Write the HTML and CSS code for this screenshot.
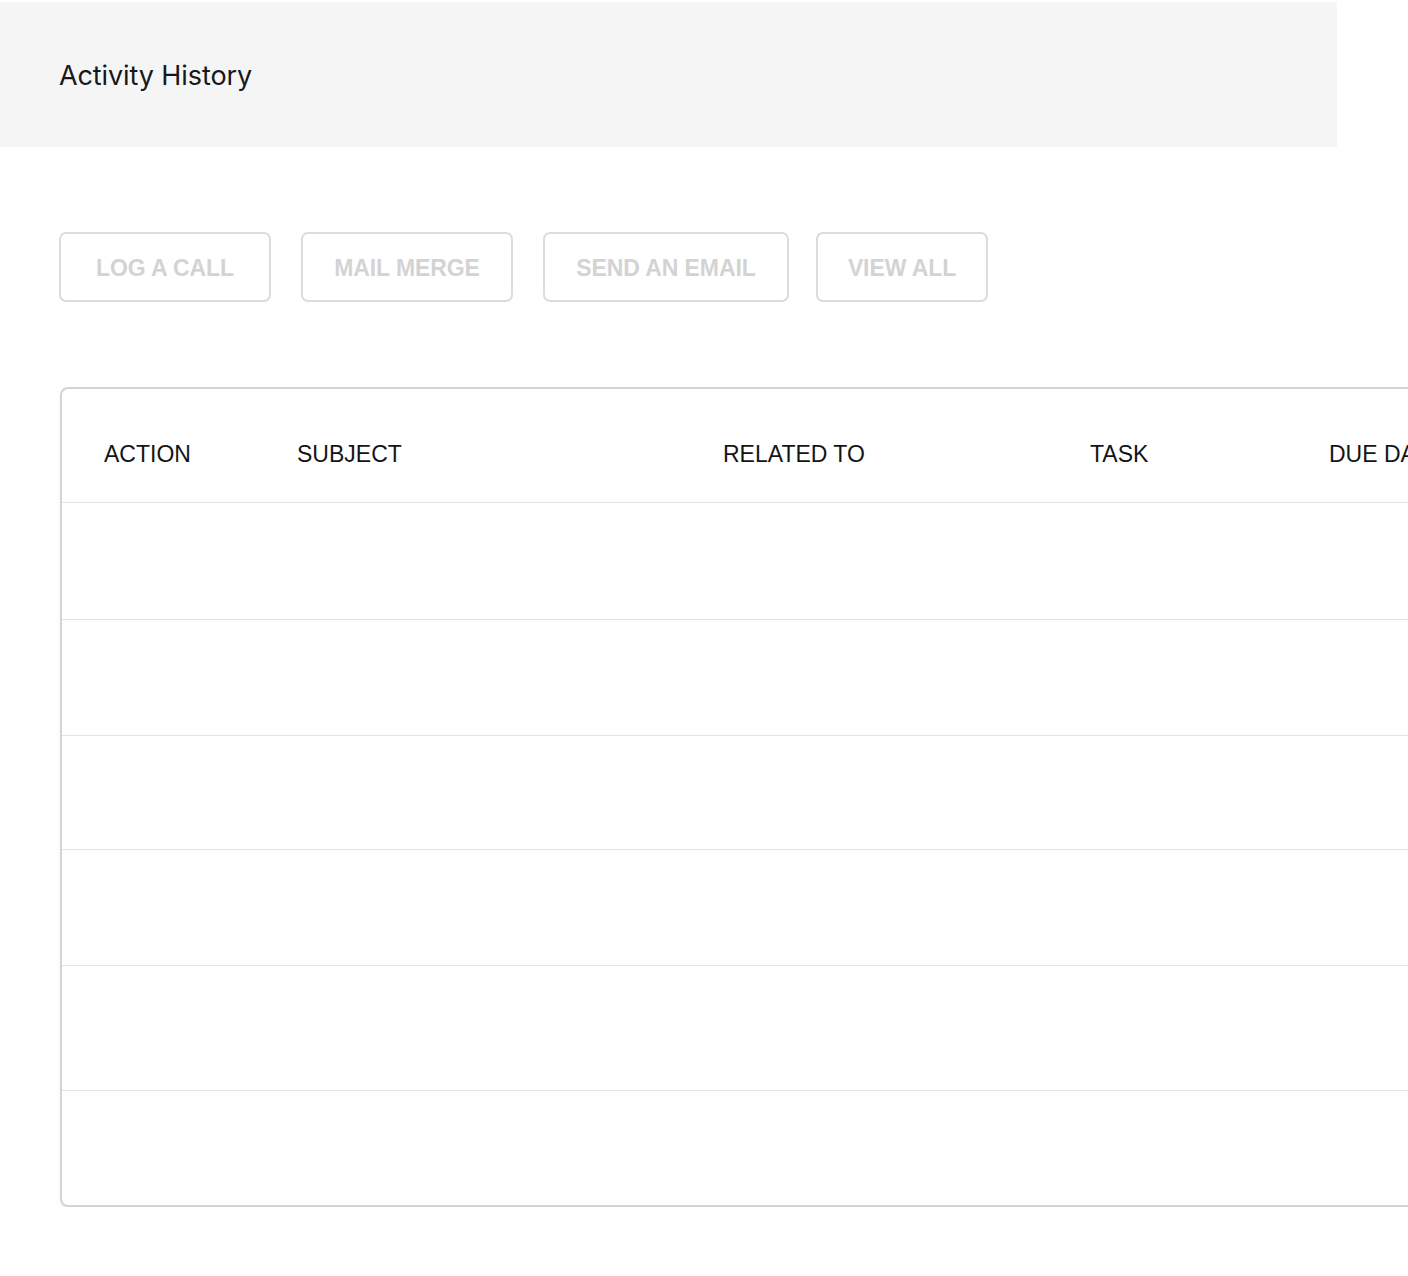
FILE: index.html
```html
<!DOCTYPE html>
<html lang="en">
<head>
<meta charset="utf-8">
<title>Activity History</title>
<link rel="stylesheet" href="styles.css">
</head>
<body>
<header class="page-header">
  <h1 class="page-title">Activity History</h1>
</header>
<main class="content">
  <div class="actions">
    <button class="btn btn-wide" type="button">LOG A CALL</button>
    <button class="btn btn-wide" type="button">MAIL MERGE</button>
    <button class="btn btn-email" type="button">SEND AN EMAIL</button>
    <button class="btn" type="button">VIEW ALL</button>
  </div>
  <div class="table">
    <div class="row head">
      <div class="cell">ACTION</div>
      <div class="cell">SUBJECT</div>
      <div class="cell">RELATED TO</div>
      <div class="cell">TASK</div>
      <div class="cell">DUE DATE</div>
    </div>
    <div class="row r1"></div>
    <div class="row"></div>
    <div class="row r-short"></div>
    <div class="row"></div>
    <div class="row r-tall"></div>
    <div class="row last"></div>
  </div>
</main>
</body>
</html>
```
FILE: styles.css
```css
html, body {
  margin: 0;
  padding: 0;
  background: #ffffff;
  overflow: hidden;
}
body {
  font-family: "Liberation Sans", Arial, sans-serif;
  color: #111;
  padding-top: 2px;
}
.page-header {
  width: 1337px;
  height: 145px;
  background: #f5f5f5;
  display: flex;
  align-items: center;
  padding-left: 59px;
  box-sizing: border-box;
}
.page-title {
  margin: 0;
  font-family: Inter, "Liberation Sans", sans-serif;
  font-weight: 400;
  font-size: 27px;
  color: #16181c;
  letter-spacing: -0.1px;
  position: relative;
  top: 1px;
}
.content {
  padding-left: 59px;
}
.actions {
  display: flex;
  gap: 30px;
  margin-top: 85px;
}
.btn {
  height: 70px;
  min-width: 172px;
  padding: 3px 29px 0;
  background: #fff;
  border: 2px solid #dcdcdc;
  border-radius: 7px;
  font-family: "Liberation Sans", Arial, sans-serif;
  font-weight: 700;
  font-size: 23px;
  letter-spacing: -0.1px;
  color: #d3d3d3;
  box-sizing: border-box;
}
.btn-wide {
  min-width: 212px;
}
.btn-email {
  min-width: 246px;
  margin-right: -3px;
}
.table {
  margin-top: 85px;
  margin-left: 1px;
  width: 1500px;
  border: 2px solid #d4d4d4;
  border-radius: 8px;
  box-shadow: 0 3px 6px rgba(0, 0, 0, 0.04);
  background: #fff;
}
.row {
  height: 115px;
  border-bottom: 1px solid #e4e4e4;
  display: grid;
  grid-template-columns: 193px 426px 367px 239px 1fr;
  padding-left: 42px;
  align-items: center;
}
.row.head {
  height: 114px;
  padding-top: 18px;
  box-sizing: border-box;
}
.row.r1 {
  height: 116px;
}
.row.r-short {
  height: 113px;
}
.row.r-tall {
  height: 124px;
}
.row.last {
  border-bottom: none;
  height: 114px;
}
.cell {
  font-size: 23px;
  color: #141414;
  white-space: nowrap;
}
```
